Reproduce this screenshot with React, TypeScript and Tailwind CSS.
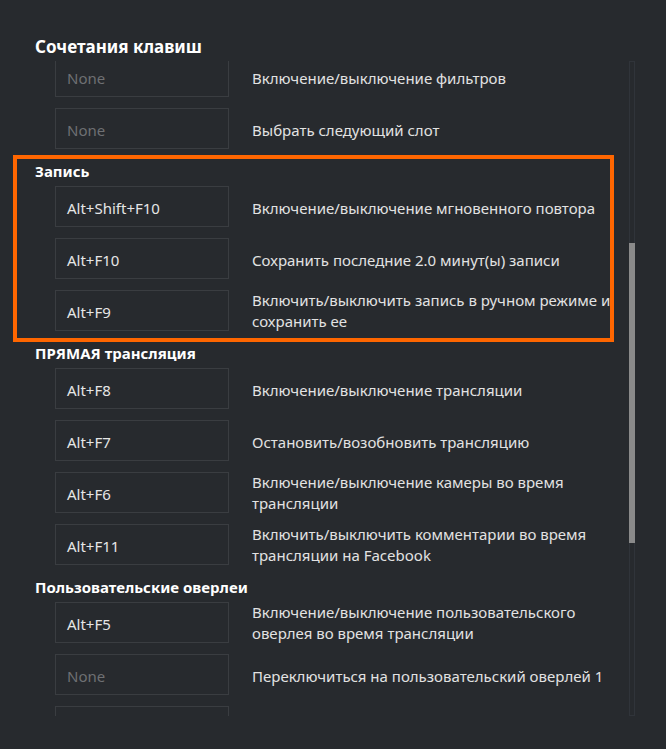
import React from "react";

type Row = { key?: string; text: React.ReactNode; multi?: boolean; blank?: boolean };
type Section = { title?: string; rows: Row[] };

const sections: Section[] = [
  {
    rows: [
      { text: "Включение/выключение фильтров" },
      { text: "Выбрать следующий слот" },
    ],
  },
  {
    title: "Запись",
    rows: [
      { key: "Alt+Shift+F10", text: "Включение/выключение мгновенного повтора" },
      { key: "Alt+F10", text: "Сохранить последние 2.0 минут(ы) записи" },
      {
        key: "Alt+F9",
        multi: true,
        text: (
          <>
            Включить/выключить запись в ручном режиме и
            <br />
            сохранить ее
          </>
        ),
      },
    ],
  },
  {
    title: "ПРЯМАЯ трансляция",
    rows: [
      { key: "Alt+F8", text: "Включение/выключение трансляции" },
      { key: "Alt+F7", text: "Остановить/возобновить трансляцию" },
      {
        key: "Alt+F6",
        multi: true,
        text: (
          <>
            Включение/выключение камеры во время
            <br />
            трансляции
          </>
        ),
      },
      {
        key: "Alt+F11",
        multi: true,
        text: (
          <>
            Включить/выключить комментарии во время
            <br />
            трансляции на Facebook
          </>
        ),
      },
    ],
  },
  {
    title: "Пользовательские оверлеи",
    rows: [
      {
        key: "Alt+F5",
        multi: true,
        text: (
          <>
            Включение/выключение пользовательского
            <br />
            оверлея во время трансляции
          </>
        ),
      },
      { text: "Переключиться на пользовательский оверлей 1" },
      { text: "", blank: true },
    ],
  },
];

const HotkeyRow = ({ row }: { row: Row }) => (
  <div className="flex items-center h-[41px] mb-[11px]">
    <div className="ml-[20px] w-[174px] h-[41px] shrink-0 border border-[#3a3d41] flex items-center pl-[11px] pt-[4px]">
      {row.blank ? null : row.key ? (
        <span className="text-[#e6e6e6]">{row.key}</span>
      ) : (
        <span className="text-[#6e7073]">None</span>
      )}
    </div>
    <div
      className={
        row.multi
          ? "ml-[23px] whitespace-nowrap leading-[21px] text-[#e2e2e2] pt-[1px]"
          : "ml-[23px] whitespace-nowrap leading-[21px] text-[#e2e2e2] pt-[4px]"
      }
    >
      {row.text}
    </div>
  </div>
);

export default function App() {
  return (
    <div
      className="relative w-[666px] h-[749px] bg-[#272a2e] overflow-hidden text-[15px]"
      style={{ fontFamily: '"Noto Sans", "Open Sans", sans-serif' }}
    >
      <div className="pl-[35px] pt-[34px] h-[61px]">
        <h1 className="text-[17px] font-bold leading-[26px] text-white">Сочетания клавиш</h1>
      </div>

      <div className="flex h-[655px]">
        <div className="flex-1 overflow-hidden pl-[35px]">
          <div className="-mt-[5px]">
            {sections.map((s, i) => (
              <div key={i}>
                {s.title && (
                  <div className="h-[22px] mb-[4px] flex items-center text-[15px] font-bold text-white">
                    {s.title}
                  </div>
                )}
                {s.rows.map((r, j) => (
                  <HotkeyRow key={j} row={r} />
                ))}
              </div>
            ))}
          </div>
        </div>

        {/* scrollbar */}
        <div className="w-[6px] h-full mr-[31px] border border-[#30343a] relative">
          <div className="absolute left-[-1px] right-[-1px] top-[181px] h-[300px] bg-[#8a8a8a]" />
        </div>
      </div>

      {/* highlight frame */}
      <div className="absolute left-[13px] top-[155px] w-[601px] h-[187px] border-4 border-[#ff6600] pointer-events-none" />
    </div>
  );
}
